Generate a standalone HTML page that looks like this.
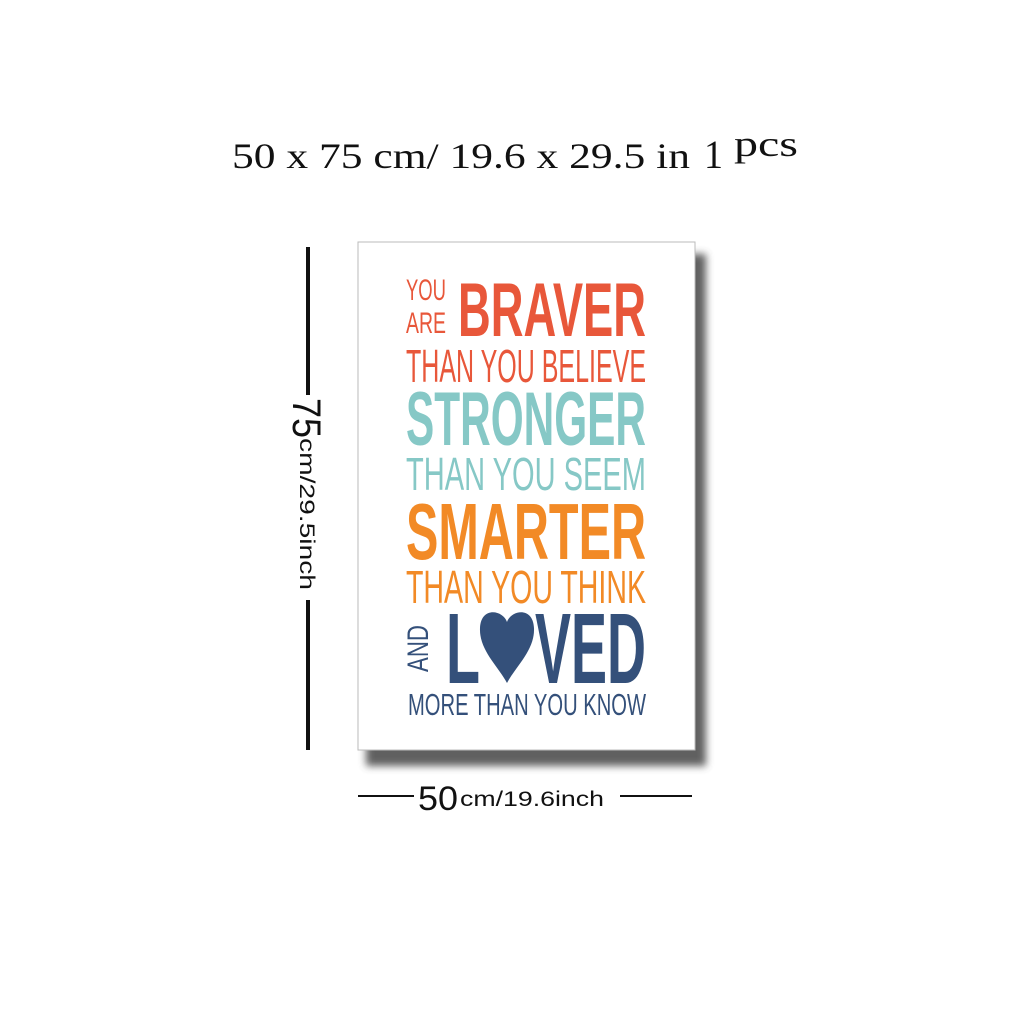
<!DOCTYPE html>
<html><head><meta charset="utf-8"><style>html,body{margin:0;padding:0;background:#fff;}svg{display:block}</style></head>
<body>
<svg width="1024" height="1024" viewBox="0 0 1024 1024" xmlns="http://www.w3.org/2000/svg">
<defs>
<filter id="sh" x="-10%" y="-10%" width="130%" height="130%"><feGaussianBlur stdDeviation="4"/></filter>
</defs>
<rect width="1024" height="1024" fill="#fff"/>
<g font-family="Liberation Serif, serif" fill="#111">
<text x="232" y="168" font-size="36" textLength="458" lengthAdjust="spacingAndGlyphs">50 x 75 cm/ 19.6 x 29.5 in</text>
<text x="704" y="168" font-size="40" textLength="19" lengthAdjust="spacingAndGlyphs">1</text>
<text x="734" y="156" font-size="36" textLength="64" lengthAdjust="spacingAndGlyphs">pcs</text>
</g>
<rect x="366" y="254" width="340" height="512" fill="#444" filter="url(#sh)" opacity="0.85"/>
<rect x="358" y="242" width="337" height="508" fill="#fff" stroke="#bbb" stroke-width="1"/>
<g font-family="Liberation Sans Narrow, Liberation Sans, sans-serif">
<text x="406" y="300" font-size="30" fill="#e8573a" textLength="40" lengthAdjust="spacingAndGlyphs">YOU</text>
<text x="406" y="333" font-size="30" fill="#e8573a" textLength="40" lengthAdjust="spacingAndGlyphs">ARE</text>
<text x="458" y="336" font-size="76" font-weight="bold" fill="#e8573a" textLength="188" lengthAdjust="spacingAndGlyphs">BRAVER</text>
<text x="406" y="382" font-size="46" fill="#e8573a" textLength="240" lengthAdjust="spacingAndGlyphs">THAN YOU BELIEVE</text>
<text x="406" y="445" font-size="76" font-weight="bold" fill="#86c8c6" textLength="240" lengthAdjust="spacingAndGlyphs">STRONGER</text>
<text x="406" y="490" font-size="46" fill="#86c8c6" textLength="240" lengthAdjust="spacingAndGlyphs">THAN YOU SEEM</text>
<text x="406" y="559" font-size="80" font-weight="bold" fill="#f28a26" textLength="240" lengthAdjust="spacingAndGlyphs">SMARTER</text>
<text x="406" y="603" font-size="46" fill="#f28a26" textLength="240" lengthAdjust="spacingAndGlyphs">THAN YOU THINK</text>
<text transform="translate(428,672) rotate(-90)" font-size="30" fill="#34507a" textLength="47" lengthAdjust="spacingAndGlyphs">AND</text>
<text x="446" y="683" font-size="100" font-weight="bold" fill="#34507a" textLength="34" lengthAdjust="spacingAndGlyphs">L</text>
<path d="M507 622 C503 610 481 606 480 628 C479 650 498 666 507 683 C516 666 535 650 534 628 C533 606 511 610 507 622 Z" fill="#34507a"/>
<text x="535" y="683" font-size="100" font-weight="bold" fill="#34507a" textLength="111" lengthAdjust="spacingAndGlyphs">VED</text>
<text x="408" y="715" font-size="31" fill="#34507a" textLength="238" lengthAdjust="spacingAndGlyphs">MORE THAN YOU KNOW</text>
</g>
<rect x="306" y="247" width="4" height="148" fill="#111"/>
<rect x="306" y="600" width="4" height="150" fill="#111"/>
<g font-family="Liberation Sans, sans-serif" fill="#111">
<text transform="translate(293,398) rotate(90)" font-size="40" textLength="40" lengthAdjust="spacingAndGlyphs">75</text>
<text transform="translate(300,438) rotate(90)" font-size="21" textLength="152" lengthAdjust="spacingAndGlyphs">cm/29.5inch</text>
</g>
<rect x="358" y="795" width="56" height="2" fill="#111"/>
<rect x="620" y="795" width="72" height="2" fill="#111"/>
<g font-family="Liberation Sans, sans-serif" fill="#111">
<text x="418" y="810" font-size="34" textLength="40" lengthAdjust="spacingAndGlyphs">50</text>
<text x="460" y="806" font-size="21" textLength="144" lengthAdjust="spacingAndGlyphs">cm/19.6inch</text>
</g>
</svg>
</body></html>
